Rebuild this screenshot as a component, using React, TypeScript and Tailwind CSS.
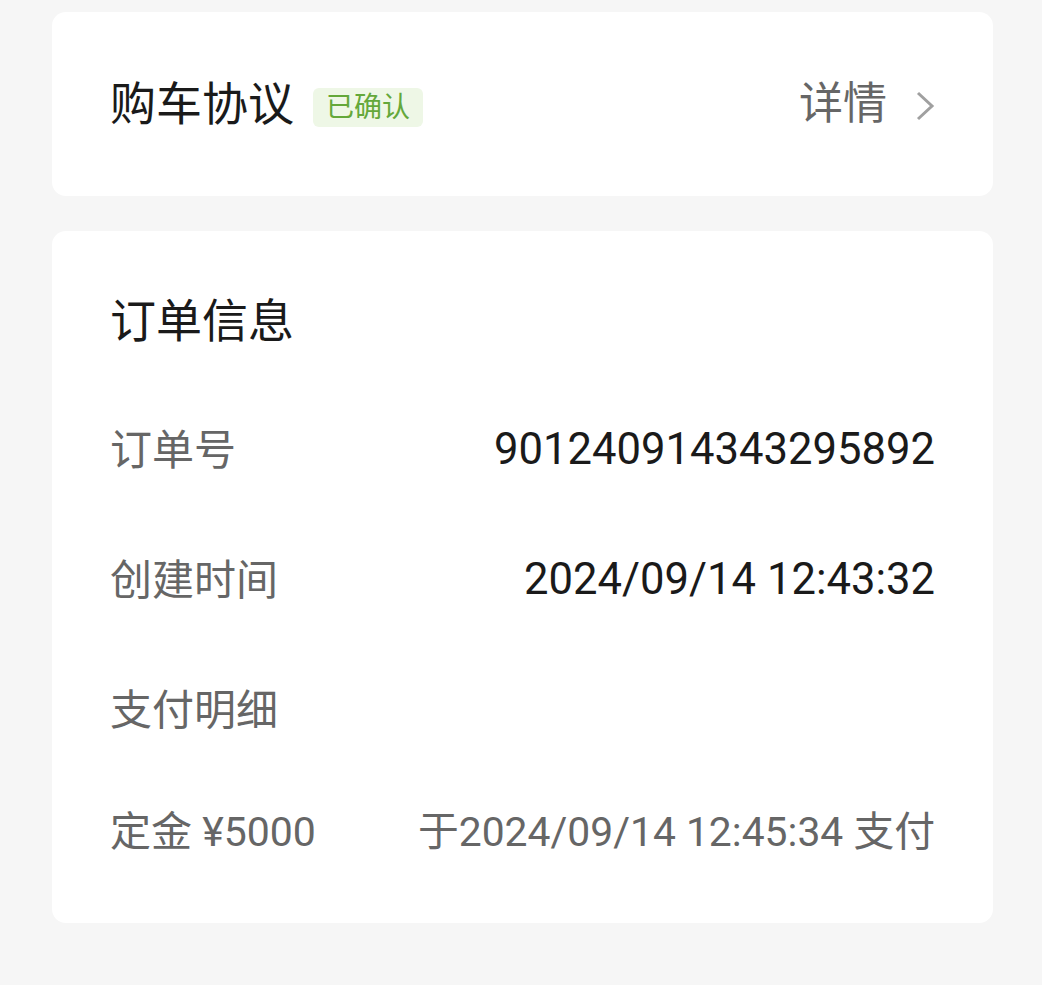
const cjk = { fontFamily: 'Roboto, "Noto Sans CJK SC", sans-serif' }

function Row({ label, value }: { label: string; value?: string }) {
    return (
        <div className="flex items-center justify-between h-[130px]">
            <span className="text-[42px] text-[#666666]">{label}</span>
            {value && <span className="text-[43.6px] text-[#1a1a1a]">{value}</span>}
        </div>
    )
}

export default function App() {
    return (
        <div className="min-h-[985px] w-[1042px] bg-[#f6f6f6] pl-[52px] pr-[49px] pt-[12px]" style={cjk}>
            <div className="bg-white rounded-[14px] h-[184px] pl-[58px] pr-[58px] flex items-center justify-between">
                <div className="flex items-center">
                    <span className="text-[46px] text-[#1a1a1a]">购车协议</span>
                    <span className="ml-[19px] mt-[6px] bg-[#eef7e6] text-[#64a83a] text-[28px] leading-[39px] px-[13px] rounded-[6px]">已确认</span>
                </div>
                <div className="flex items-center">
                    <span className="text-[44px] text-[#666666]">详情</span>
                    <svg className="ml-[28px] mt-[4px]" width="20" height="32" viewBox="0 0 20 32" fill="none">
                        <path d="M3 3 L17 16 L3 29" stroke="#a0a0a0" strokeWidth="3" />
                    </svg>
                </div>
            </div>

            <div className="mt-[35px] bg-white rounded-[14px] h-[692px] pl-[58px] pr-[58px] pt-[26px]">
                <div className="h-[128px] flex items-center">
                    <span className="text-[46px] text-[#1a1a1a]">订单信息</span>
                </div>
                <Row label="订单号" value="901240914343295892" />
                <Row label="创建时间" value="2024/09/14 12:43:32" />
                <Row label="支付明细" />
                <div className="flex items-center justify-between h-[115px]">
                    <span className="text-[41px] text-[#666666]">定金 ¥5000</span>
                    <span className="text-[40.8px] text-[#666666]">于2024/09/14 12:45:34 支付</span>
                </div>
            </div>
        </div>
    )
}
